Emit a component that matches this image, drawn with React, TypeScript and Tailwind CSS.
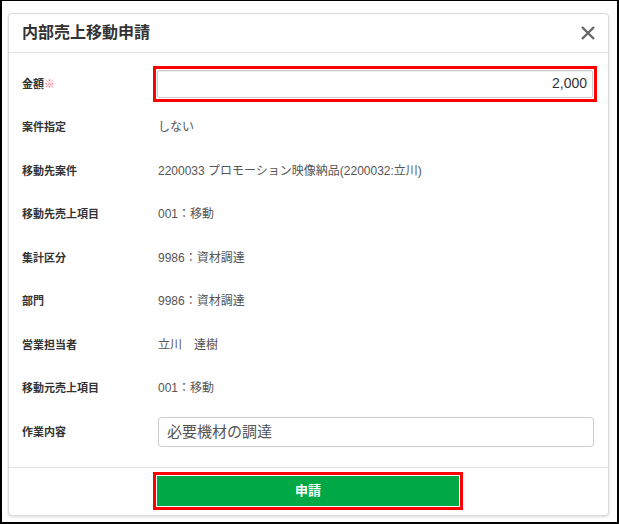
import React from 'react';

interface Row {
  label: string;
  value: string;
}

const rows: Row[] = [
  { label: '案件指定', value: 'しない' },
  { label: '移動先案件', value: '2200033 プロモーション映像納品(2200032:立川)' },
  { label: '移動先売上項目', value: '001：移動' },
  { label: '集計区分', value: '9986：資材調達' },
  { label: '部門', value: '9986：資材調達' },
  { label: '営業担当者', value: '立川　達樹' },
  { label: '移動元売上項目', value: '001：移動' },
];

const font = { fontFamily: '"Liberation Sans", "Noto Sans CJK JP", sans-serif' };

const App: React.FC = () => {
  return (
    <div
      className="w-[619px] h-[524px] bg-white border-l-2 border-r-2 border-t border-b-2 border-black overflow-hidden"
      style={font}
    >
      <div className="ml-[6px] mt-[12px] w-[601px] h-[503px] bg-white border border-[#dcdcdc] rounded-[4px] shadow-[0_1px_3px_rgba(0,0,0,0.15)] flex flex-col">
        {/* Header */}
        <div className="h-[39px] flex items-center justify-between pl-[13px] pr-[12px] border-b border-[#e2e2e2]">
          <h2 className="text-[16px] font-bold text-[#333]">内部売上移動申請</h2>
          <svg width="16" height="16" viewBox="0 0 16 16" className="text-[#666]">
            <path d="M2 2 L14 14 M14 2 L2 14" stroke="currentColor" strokeWidth="2.4" strokeLinecap="butt" />
          </svg>
        </div>

        {/* Body */}
        <div className="flex-1 pl-[13px] pr-[8px] pt-[9px]">
          <div className="h-[43.5px] flex items-center">
            <div className="w-[136px] shrink-0 text-[11px] font-bold text-[#333]">
              金額<span className="text-[#ff6b8a]">※</span>
            </div>
            <div className="ml-[-5px] w-[444px] shrink-0 h-[36px] border-[3px] border-[#ff0000] p-[1px] flex">
              <div className="flex-1 border border-[#ccc] rounded-[2px] flex items-center justify-end pr-[5px] text-[14px] text-[#333] shadow-[inset_0_1px_1px_rgba(0,0,0,0.075)]">
                2,000
              </div>
            </div>
          </div>
          {rows.map((row) => (
            <div key={row.label} className="h-[43.5px] flex items-center">
              <div className="w-[136px] shrink-0 text-[11px] font-bold text-[#333]">{row.label}</div>
              <div className="text-[12px] text-[#555]">{row.value}</div>
            </div>
          ))}
          <div className="h-[43.5px] flex items-center">
            <div className="w-[136px] shrink-0 text-[11px] font-bold text-[#333]">作業内容</div>
            <div className="w-[436px] shrink-0 h-[30px] border border-[#ccc] rounded-[3px] flex items-center pl-[8px] text-[15px] text-[#555]">
              必要機材の調達
            </div>
          </div>
        </div>

        {/* Footer */}
        <div className="h-[48px] border-t border-[#e2e2e2] flex justify-start pl-[144px] pt-[4px]">
          <div className="w-[310px] h-[38px] border-[3px] border-[#ff0000] p-[1px]">
            <button className="w-full h-full bg-[#00a846] text-white text-[13px] font-bold">申請</button>
          </div>
        </div>
      </div>
    </div>
  );
};

export default App;
